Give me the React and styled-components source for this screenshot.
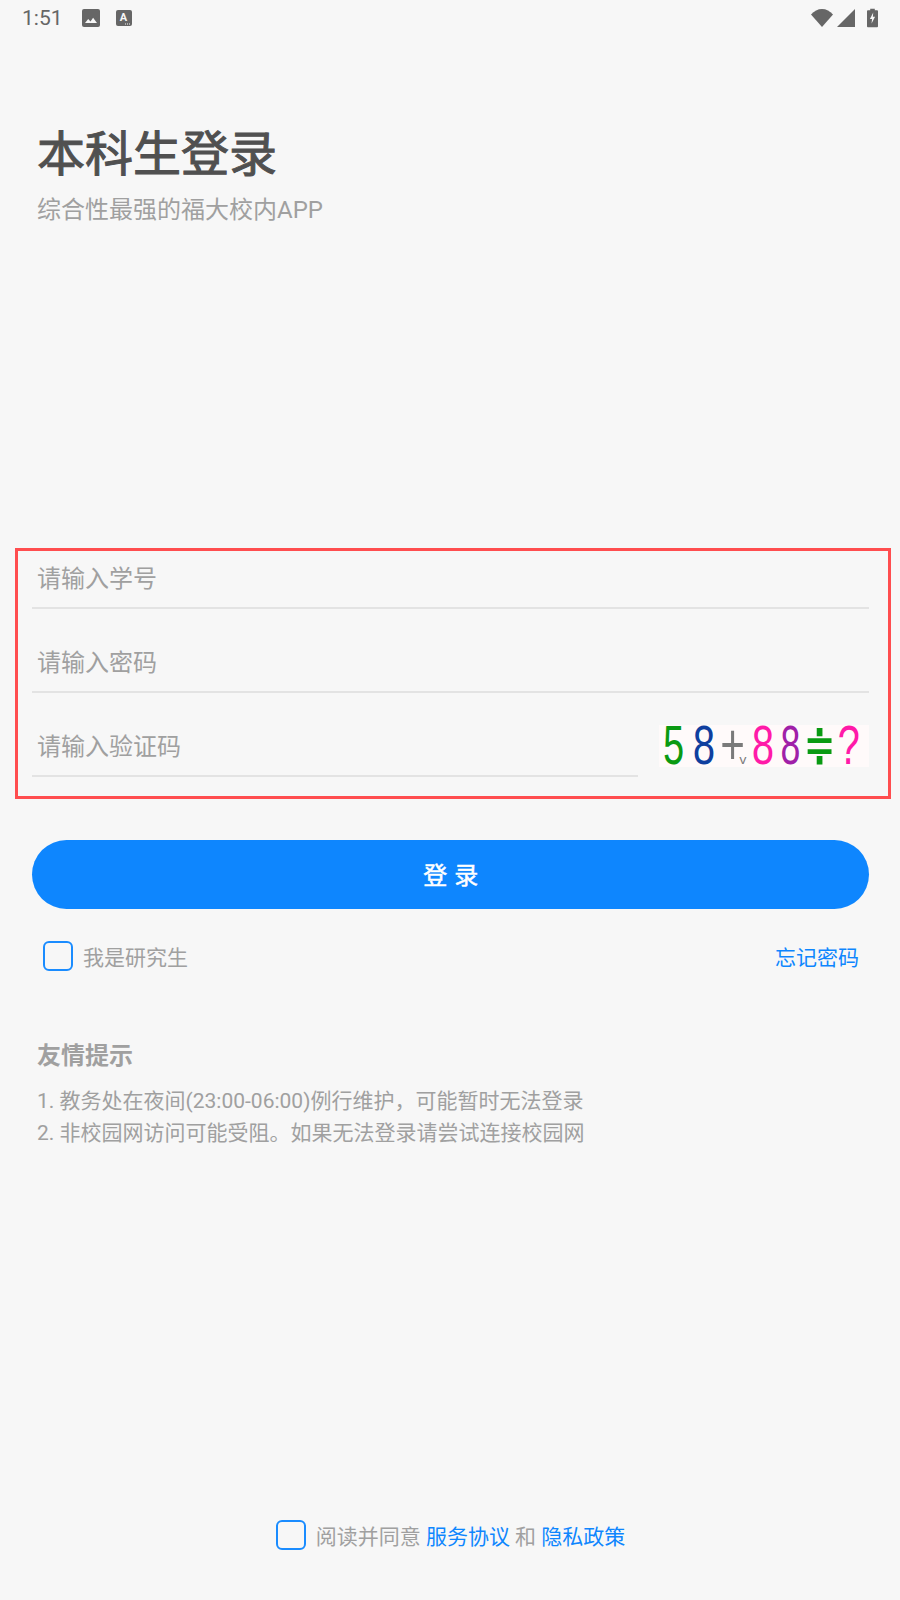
import styled, { createGlobalStyle } from "styled-components";

const GlobalStyle = createGlobalStyle`
  * { box-sizing: border-box; }
  html, body { margin: 0; padding: 0; background: #f7f7f7; }
  body { font-family: Roboto, "Noto Sans CJK SC", sans-serif; }
`;

const Page = styled.div`
  width: 900px;
  height: 1600px;
  display: flex;
  flex-direction: column;
  overflow: hidden;
  background: #f7f7f7;
`;

const StatusBar = styled.div`
  height: 36px;
  display: flex;
  align-items: center;
  padding: 0 22px;
  color: #666;
`;

const Time = styled.span`
  font-size: 21px;
  line-height: 36px;
  width: 60px;
`;

const StatusRight = styled.div`
  margin-left: auto;
  display: flex;
  align-items: center;
  gap: 4px;
`;

const Header = styled.header`
  margin-top: 91px;
  padding-left: 37px;
`;

const Title = styled.h1`
  margin: 0;
  font-size: 48px;
  line-height: 56px;
  font-weight: 400;
  -webkit-text-stroke: 1px #505050;
  color: #505050;
`;

const Subtitle = styled.p`
  margin: 12px 0 0;
  font-size: 24px;
  line-height: 30px;
  color: #a0a0a0;
`;

const FormBox = styled.div`
  margin: 323px 0 0 15px;
  width: 876px;
  height: 251px;
  border: 3px solid #ff4d4f;
  padding: 0 19px 0 14px;
  display: flex;
  flex-direction: column;
  gap: 26px;
`;

const FieldRow = styled.div`
  display: flex;
  align-items: flex-start;
`;

const Input = styled.input`
  flex: 1;
  min-width: 0;
  height: 58px;
  padding: 0 0 0 5px;
  border: 0;
  border-bottom: 2px solid #e3e3e3;
  outline: none;
  background: transparent;
  font: inherit;
  font-size: 24px;
  line-height: 54px;
  color: #4a4a4a;
  &::placeholder { color: #a0a0a0; opacity: 1; }
`;

const Captcha = styled.div`
  width: 210px;
  height: 42px;
  margin: 6px 0 0 21px;
  background: #fffafa;
  display: flex;
  align-items: center;
  font-family: "Liberation Mono", "DejaVu Sans Mono", monospace;
`;

const CaptchaChar = styled.span`
  flex: none;
  width: ${(p) => p.$w}px;
  text-align: center;
  font-size: 42px;
  line-height: 42px;
  color: ${(p) => p.$color};
  transform: translateY(3px) scale(${(p) => p.$sx}, 1.35);
`;

const CaptchaMark = styled.span`
  flex: none;
  width: 10px;
  align-self: flex-end;
  text-align: center;
  font-size: 13px;
  line-height: 12px;
  color: #7a7a7a;
`;

const LoginButton = styled.button`
  margin: 41px 0 0 32px;
  width: 837px;
  height: 69px;
  padding: 0 0 2px 1px;
  border: 0;
  border-radius: 35px;
  background: #0e86fe;
  color: #fff;
  font: inherit;
  font-size: 24px;
  font-weight: 400;
  -webkit-text-stroke: 0.5px #fff;
  letter-spacing: 0.5px;
  white-space: pre;
`;

const OptionRow = styled.div`
  margin: 32px 41px 0 43px;
  display: flex;
  align-items: center;
  justify-content: space-between;
  font-size: 21px;
`;

const CheckLabel = styled.label`
  display: flex;
  align-items: center;
  gap: 10px;
  color: #a0a0a0;
`;

const CheckBox = styled.span`
  width: 30px;
  height: 30px;
  border: 2px solid #1a8cff;
  border-radius: 6px;
  flex: none;
`;

const BlueLink = styled.a`
  color: #0e86fe;
`;

const Tips = styled.section`
  margin-top: 69px;
  padding-left: 37px;
  color: #a0a0a0;
`;

const TipsTitle = styled.h2`
  margin: 0 0 13px;
  font-size: 24px;
  line-height: 32px;
  font-weight: 700;
`;

const TipLine = styled.div`
  font-size: 21px;
  line-height: 32px;
`;

const Agreement = styled.div`
  margin-top: auto;
  padding: 0 0 50px 1px;
  display: flex;
  justify-content: center;
  align-items: center;
  gap: 10px;
  font-size: 21px;
  color: #a0a0a0;
`;

const AgreementText = styled.span`
  white-space: pre;
`;

const ImageIcon = () => (
  <svg width="18" height="18" viewBox="0 0 18 18">
    <rect width="18" height="18" rx="2" fill="#666" />
    <path d="M3 14l3.2-4 2.3 2.4 2.6-3.6L15 14z" fill="#f7f7f7" />
  </svg>
);

const KeyboardIcon = () => (
  <svg width="16" height="16" viewBox="0 0 16 16" style={{ marginLeft: 16 }}>
    <rect width="16" height="16" rx="2" fill="#666" />
    <text x="7.5" y="11" fontSize="11" fontWeight="700" fontFamily="Roboto" textAnchor="middle" fill="#f7f7f7">A</text>
    <path d="M9 14h1M11 14h1M13 14h1" stroke="#f7f7f7" strokeWidth="1" />
  </svg>
);

const WifiIcon = () => (
  <svg width="22" height="18" viewBox="0 0 22 18">
    <path d="M0 5.5C3 2 7 0 11 0s8 2 11 5.5L11 18z" fill="#666" />
  </svg>
);

const SignalIcon = () => (
  <svg width="18" height="18" viewBox="0 0 18 18">
    <path d="M18 0v18H0z" fill="#666" />
  </svg>
);

const BatteryIcon = () => (
  <svg width="11" height="20" viewBox="0 0 12 20" style={{ marginLeft: 8 }}>
    <path d="M3.5 0h5v1.5H11a1 1 0 0 1 1 1V19a1 1 0 0 1-1 1H1a1 1 0 0 1-1-1V2.5a1 1 0 0 1 1-1h2.5z" fill="#666" />
    <path d="M6.8 4L3.2 11h2.3L5 16l3.8-7.5H6.4z" fill="#f7f7f7" />
  </svg>
);

export default function App() {
  return (
    <Page>
      <GlobalStyle />
      <StatusBar>
        <Time>1:51</Time>
        <ImageIcon />
        <KeyboardIcon />
        <StatusRight>
          <WifiIcon />
          <SignalIcon />
          <BatteryIcon />
        </StatusRight>
      </StatusBar>

      <Header>
        <Title>本科生登录</Title>
        <Subtitle>综合性最强的福大校内APP</Subtitle>
      </Header>

      <FormBox>
        <FieldRow>
          <Input placeholder="请输入学号" />
        </FieldRow>
        <FieldRow>
          <Input placeholder="请输入密码" />
        </FieldRow>
        <FieldRow>
          <Input placeholder="请输入验证码" />
          <Captcha>
            <CaptchaChar $color="#0a9a12" $w={29} $sx={0.9}>5</CaptchaChar>
            <CaptchaChar $color="#0f3f9f" $w={32} $sx={0.95}>8</CaptchaChar>
            <CaptchaChar $color="#7a7a7a" $w={18} $sx={1}>+</CaptchaChar>
            <CaptchaMark>v</CaptchaMark>
            <CaptchaChar $color="#ff1aa8" $w={30} $sx={0.95}>8</CaptchaChar>
            <CaptchaChar $color="#a020a8" $w={24} $sx={0.85}>8</CaptchaChar>
            <CaptchaChar $color="#0a9a12" $w={35} $sx={1.1}>≑</CaptchaChar>
            <CaptchaChar $color="#ff1aa8" $w={20} $sx={0.95}>?</CaptchaChar>
          </Captcha>
        </FieldRow>
      </FormBox>

      <LoginButton>登 录</LoginButton>

      <OptionRow>
        <CheckLabel>
          <CheckBox />
          我是研究生
        </CheckLabel>
        <BlueLink>忘记密码</BlueLink>
      </OptionRow>

      <Tips>
        <TipsTitle>友情提示</TipsTitle>
        <TipLine>1. 教务处在夜间(23:00-06:00)例行维护，可能暂时无法登录</TipLine>
        <TipLine>2. 非校园网访问可能受阻。如果无法登录请尝试连接校园网</TipLine>
      </Tips>

      <Agreement>
        <CheckBox />
        <AgreementText>
          阅读并同意 <BlueLink>服务协议</BlueLink> 和 <BlueLink>隐私政策</BlueLink>
        </AgreementText>
      </Agreement>
    </Page>
  );
}
